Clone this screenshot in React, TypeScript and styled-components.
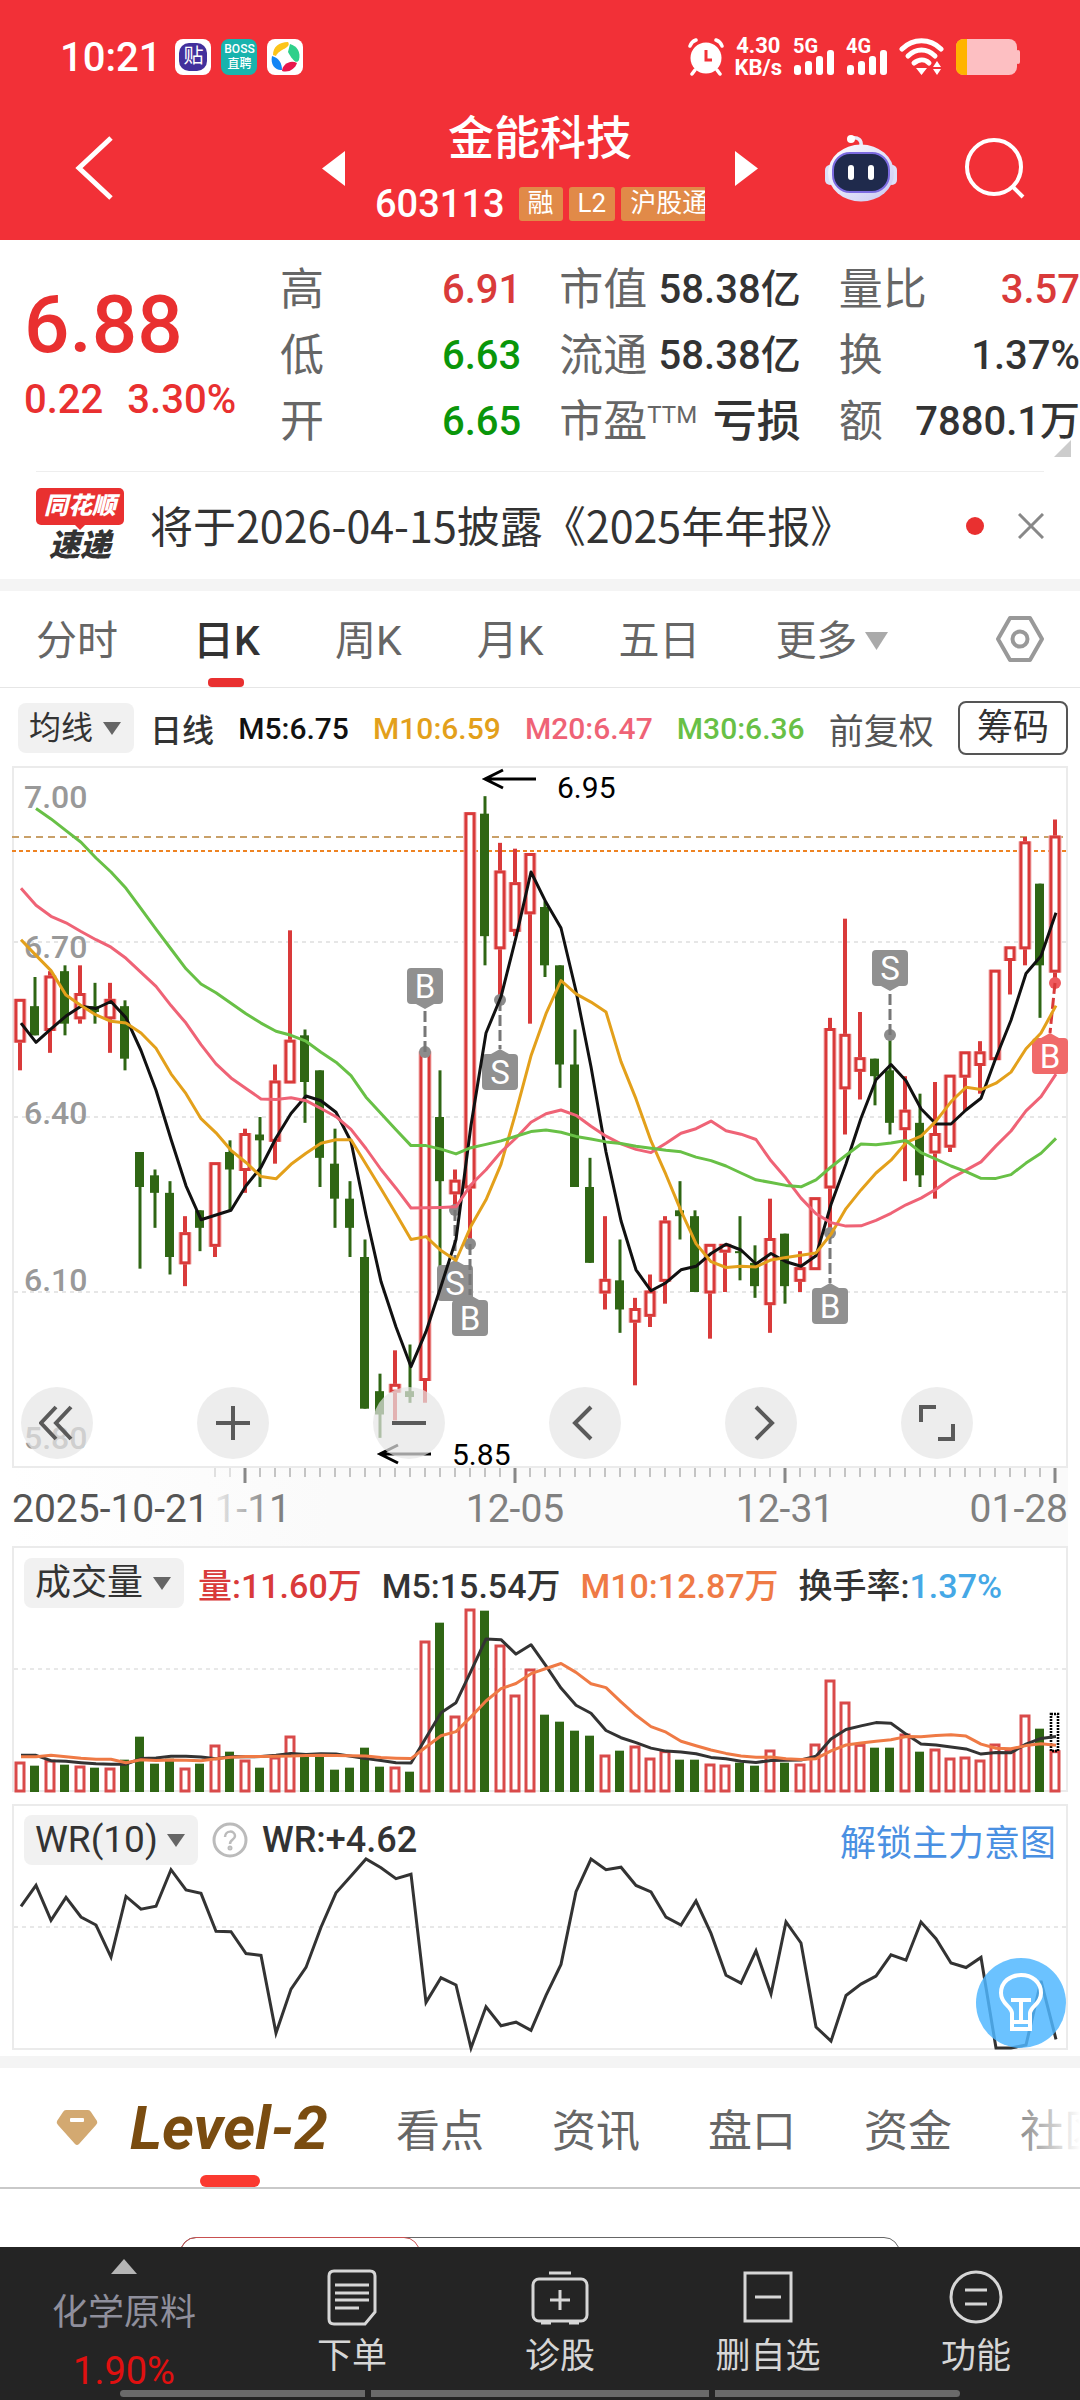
import React from "react";
import styled, { createGlobalStyle, css } from "styled-components";

const SANS = `Roboto, "Noto Sans CJK SC", sans-serif`;

const C = {
  red: "#e93030",
  brand: "#f23037",
  up: "#d93a3a",
  down: "#2f6614",
  fall: "#0a960a",
  ink: "#333333",
  mute: "#666666",
  line: "#ebebeb",
  band: "#f4f4f4",
};

const GlobalStyle = createGlobalStyle`
  *, *::before, *::after { box-sizing: border-box; }
  body { margin: 0; background: #fff; font-family: ${SANS}; color: ${C.ink}; }
  button { border: 0; padding: 0; margin: 0; background: none; font: inherit; color: inherit; cursor: pointer; }
  a { color: inherit; text-decoration: none; }
  h1, p, dl, dd, dt { margin: 0; font-weight: inherit; }
  svg { display: block; }
`;

/* ---------- market data (prices in cents: open, close, high, low) ---------- */

type Candle = [number, number, number, number];

const CANDLES: Candle[] = [
  [653, 660, 660, 648], [659, 654, 664, 654], [655, 664, 665, 651], [665, 656, 666, 654],
  [657, 661, 666, 656], [659, 658, 663, 656], [657, 660, 663, 651], [659, 650, 660, 648],
  [634, 628, 634, 614], [630, 627, 631, 621], [627, 616, 629, 613], [615, 620, 623, 611],
  [624, 621, 624, 617], [618, 632, 632, 616], [634, 631, 636, 624], [631, 637, 638, 627],
  [637, 636, 640, 628], [636, 646, 649, 632], [646, 653, 672, 646], [654, 646, 655, 639],
  [648, 633, 648, 628], [632, 626, 638, 621], [626, 621, 629, 616], [616, 590, 619, 590],
  [593, 589, 596, 585], [593, 594, 600, 588], [593, 592, 601, 591], [595, 651, 651, 591],
  [640, 629, 648, 614], [627, 629, 631, 624], [628, 692, 692, 618], [692, 671, 695, 666],
  [669, 682, 687, 660], [672, 680, 686, 671], [675, 685, 685, 656], [676, 666, 677, 664],
  [666, 649, 666, 645], [649, 628, 655, 628], [628, 615, 633, 615], [610, 612, 623, 607],
  [612, 607, 619, 603], [605, 607, 609, 594], [606, 610, 613, 604], [612, 622, 623, 608],
  [624, 623, 629, 619], [623, 610, 624, 610], [610, 618, 618, 602], [617, 618, 618, 610],
  [617, 617, 623, 612], [615, 611, 618, 609], [608, 619, 626, 603], [620, 611, 620, 608],
  [612, 614, 617, 610], [614, 626, 626, 614], [628, 655, 657, 620], [645, 654, 674, 637],
  [648, 650, 658, 643], [650, 647, 650, 642], [648, 639, 654, 637], [638, 641, 647, 629],
  [639, 630, 644, 628], [634, 637, 646, 626], [635, 647, 647, 634], [647, 651, 651, 641],
  [649, 651, 653, 644], [650, 665, 665, 650], [667, 669, 669, 661], [669, 687, 688, 666],
  [680, 666, 680, 657], [665, 688, 691, 663],
];

const VOLUMES = [
  87, 76, 93, 79, 75, 70, 69, 94, 163, 82, 97, 69, 82, 138, 118, 93, 70, 102, 165, 102, 105, 64,
  70, 130, 73, 72, 58, 450, 505, 225, 546, 541, 438, 288, 366, 229, 208, 181, 166, 108, 121, 135,
  99, 121, 94, 94, 81, 78, 85, 76, 123, 85, 81, 141, 333, 267, 140, 130, 130, 171, 118, 126, 99,
  102, 93, 141, 125, 228, 187, 121,
];

const EARLY = {
  m5: [656.1, 652.8, 655.1, 657.3],
  m10: [670.4, 667.7, 665.1, 660.9, 659.1, 657.5, 656.4, 656.1, 654.4],
  m20: [
    679.2, 676.3, 674.4, 673.3, 671.8, 670.4, 669.1, 667.2, 664.8, 662.4, 659.1, 656.1, 652.4,
    649.1, 646.7, 644.9, 643.1, 643, 643.3,
  ],
  m30: [
    NaN, 692.9, 691.1, 689.1, 687.1, 684.4, 682, 679.2, 675.7, 672.2, 668.8, 665.4, 662.8, 661.3,
    659.5, 657.7, 656.1, 654.7, 654, 653, 651.1, 649.4, 647.1, 643.4, 640.6, 637.8, 635.1, 635.1,
    634.5,
  ],
  v5: [104, 104, 88, 86],
  v10: [100, 100, 104, 100, 95, 92, 92, 82, 91],
  wr: [75, 86.1, 67.5, 79.7, 69.3, 65.1, 48.1, 80.2, 73.5],
};

const average = (values: number[], span: number, early: number[]) =>
  values.map((_, i) =>
    i < span - 1
      ? early[i]
      : values.slice(i - span + 1, i + 1).reduce((a, b) => a + b, 0) / span
  );

const closes = CANDLES.map((c) => c[1]);
const WR = CANDLES.map((c, i) => {
  if (i < 9) return EARLY.wr[i];
  const span = CANDLES.slice(i - 9, i + 1);
  const high = Math.max(...span.map((s) => s[2]));
  const low = Math.min(...span.map((s) => s[3]));
  return ((high - c[1]) / (high - low)) * 100;
});

const STEP = 15;
const xAt = (i: number) => 6 + i * STEP;
const priceY = (p: number) => ((700 - p) * 700) / 120 - 1;
const volY = (v: number) => 182 - v / 3;
const wrY = (w: number) => 184 - w * 1.89;
const isUp = (c: Candle) => c[1] > c[0];

const linePoints = (values: number[], y: (n: number) => number) =>
  values
    .map((v, i) => (Number.isNaN(v) ? "" : `${xAt(i) + 1},${y(v).toFixed(1)}`))
    .filter(Boolean)
    .join(" ");

/* ---------- layout ---------- */

const Page = styled.div`
  display: flex;
  flex-direction: column;
  min-height: 100vh;
  overflow: hidden;
`;
const Row = styled.div<{ $gap?: number }>`
  display: flex;
  align-items: center;
  gap: ${(p) => p.$gap ?? 0}px;
`;
const Band = styled.div`
  height: 12px;
  background: ${C.band};
`;

/* ---------- header ---------- */

const Header = styled.header`
  background: ${C.brand};
  color: #fff;
  height: 240px;
`;
const StatusBar = styled.div`
  display: flex;
  align-items: center;
  justify-content: space-between;
  height: 108px;
  padding: 6px 60px 0;
`;
const Clock = styled.time`
  font-size: 40px;
  font-weight: 500;
  margin-right: 4px;
`;
const NetSpeed = styled.div`
  font-size: 22px;
  line-height: 22px;
  font-weight: 700;
  text-align: center;
  span {
    display: block;
  }
`;
const SignalBox = styled.div`
  display: grid;
  height: 36px;
  width: 42px;
  span {
    grid-area: 1 / 1;
    font-size: 20px;
    line-height: 14px;
    font-weight: 700;
  }
  svg {
    grid-area: 1 / 1;
  }
`;
const BossIcon = styled.span`
  width: 36px;
  height: 36px;
  border-radius: 8px;
  background: #19b3ad;
  display: flex;
  flex-direction: column;
  align-items: center;
  justify-content: center;
  font-size: 12px;
  line-height: 15px;
  font-weight: 500;
`;
const PostIcon = styled.span`
  width: 36px;
  height: 36px;
  border-radius: 8px;
  background: #fff;
  display: grid;
  place-items: center;
  span {
    width: 28px;
    height: 28px;
    border-radius: 10px;
    background: #42309c;
    font-size: 20px;
    line-height: 27px;
    text-align: center;
  }
`;
const TitleBar = styled.div`
  display: grid;
  grid-template-columns: 1fr 330px 1fr;
  align-items: center;
  height: 120px;
  column-gap: 30px;
`;
const TitleSide = styled.div<{ $right?: boolean }>`
  display: flex;
  align-items: center;
  justify-content: space-between;
  padding: ${(p) => (p.$right ? "0 54px 0 0" : "0 0 0 74px")};
`;
const StockName = styled.h1`
  font-size: 46px;
  line-height: 60px;
  font-weight: 500;
  text-align: center;
`;
const CodeLine = styled.div`
  display: flex;
  align-items: center;
  gap: 6px;
  height: 48px;
  margin-top: 12px;
  overflow: hidden;
  white-space: nowrap;
`;
const Code = styled.span`
  font-size: 38px;
  font-weight: 500;
  margin-right: 8px;
`;
const Tag = styled.span`
  background: #e18a48;
  font-size: 26px;
  line-height: 32px;
  height: 34px;
  padding: 0 9px;
  border-radius: 3px;
  flex: none;
`;

/* ---------- quote summary ---------- */

const Quote = styled.section`
  display: grid;
  grid-template-columns: 242px 1fr 1fr 1fr;
  column-gap: 38px;
  height: 231px;
  padding-top: 17px;
  position: relative;
`;
const PriceBlock = styled.div`
  padding: 18px 0 0 24px;
  color: ${C.red};
  font-weight: 500;
  white-space: nowrap;
`;
const Price = styled.p`
  font-size: 80px;
  line-height: 100px;
`;
const Change = styled.p`
  display: flex;
  gap: 24px;
  font-size: 40px;
  line-height: 50px;
`;
const Stats = styled.dl`
  white-space: nowrap;
`;
const Stat = styled.div`
  display: flex;
  justify-content: space-between;
  font-size: 44px;
  line-height: 66px;
  dt {
    color: ${C.mute};
  }
  sup {
    font-size: 24px;
    line-height: 24px;
    vertical-align: 14px;
  }
`;
const StatValue = styled.dd<{ $color?: string; $size?: number }>`
  font-size: ${(p) => p.$size ?? 40}px;
  font-weight: 500;
  color: ${(p) => p.$color ?? C.ink};
`;
const Corner = styled.i`
  position: absolute;
  right: 9px;
  bottom: 14px;
  border-left: 17px solid transparent;
  border-bottom: 17px solid #ccc;
`;

const News = styled.section`
  display: flex;
  align-items: center;
  height: 108px;
  margin: 0 36px;
  border-top: 1px solid #eee;
  gap: 26px;
`;
const NewsLogo = styled.div`
  width: 88px;
  font-weight: 900;
  font-style: italic;
  text-align: center;
  b {
    display: block;
    position: relative;
    background: ${C.red};
    color: #fff;
    border-radius: 5px;
    font-size: 24px;
    line-height: 37px;
  }
  b::after {
    content: "";
    position: absolute;
    left: 38px;
    top: 36px;
    border: 6px solid transparent;
    border-top-color: ${C.red};
    border-bottom: 0;
  }
  span {
    display: block;
    padding-top: 3px;
    font-size: 31px;
    line-height: 35px;
  }
`;
const NewsLink = styled.a`
  flex: 1;
  font-family: "Noto Sans CJK SC", sans-serif;
  font-size: 43px;
  line-height: 60px;
  padding-bottom: 4px;
  white-space: nowrap;
`;
const Dot = styled.i`
  width: 18px;
  height: 18px;
  border-radius: 50%;
  background: ${C.red};
  margin-right: 8px;
`;

/* ---------- period tabs ---------- */

const Tabs = styled.nav`
  display: flex;
  align-items: center;
  height: 97px;
  padding: 0 36px;
  gap: 75px;
  border-bottom: 1px solid #e6e6e6;
  & > :last-child {
    margin-left: auto;
  }
`;
const Tab = styled.button<{ $on?: boolean }>`
  position: relative;
  height: 96px;
  font-size: 41px;
  line-height: 60px;
  padding-top: 4px;
  color: ${C.mute};
  white-space: nowrap;
  display: flex;
  align-items: center;
  gap: 8px;
  ${(p) =>
    p.$on &&
    css`
      color: ${C.ink};
      font-weight: 500;
      &::after {
        content: "";
        position: absolute;
        left: calc(50% - 18px);
        bottom: 0;
        width: 36px;
        height: 9px;
        border-radius: 4px;
        background: ${C.red};
      }
    `}
`;
const IconButton = styled.button`
  display: grid;
  place-items: center;
`;

/* ---------- indicator rows ---------- */

const Legend = styled.div`
  display: flex;
  align-items: center;
  justify-content: space-between;
  height: 78px;
  padding: 2px 12px 0 18px;
  white-space: nowrap;
`;
const SelectBox = styled.label`
  display: flex;
  align-items: center;
  gap: 9px;
  height: 50px;
  padding: 0 13px 0 11px;
  background: #f1f1f1;
  border-radius: 8px;
`;
const Select = styled.select<{ $size: number }>`
  appearance: none;
  border: 0;
  padding: 0;
  background: transparent;
  font-family: inherit;
  font-size: ${(p) => p.$size}px;
  line-height: 48px;
  color: ${C.ink};
`;
const Figure = styled.span<{ $color?: string; $size?: number }>`
  color: ${(p) => p.$color ?? C.ink};
  font-size: ${(p) => p.$size ?? 30}px;
  font-weight: 500;
  white-space: nowrap;
`;
const Outline = styled.button`
  height: 54px;
  padding: 0 17px;
  border: 2px solid #555;
  border-radius: 8px;
  font-size: 36px;
  line-height: 48px;
`;
const PlainButton = styled.button`
  font-size: 35px;
  color: #555;
`;

/* ---------- chart panels ---------- */

const Panel = styled.section<{ $h: number }>`
  position: relative;
  height: ${(p) => p.$h}px;
  margin: 0 12px;
  border: 2px solid ${C.line};
`;
const Plot = styled.svg<{ $h: number }>`
  width: 100%;
  height: ${(p) => p.$h}px;
  overflow: visible;
  font-family: ${SANS};
`;
const PanelHead = styled.div<{ $h: number }>`
  display: flex;
  align-items: center;
  height: ${(p) => p.$h}px;
  padding: 10px 10px 0 10px;
  gap: 14px;
  & > span + span {
    margin-left: 6px;
  }
`;
const Controls = styled.div`
  position: absolute;
  left: 7px;
  bottom: 7px;
  display: flex;
  gap: 104px;
`;
const Round = styled.button`
  width: 72px;
  height: 72px;
  border-radius: 50%;
  background: rgba(230, 230, 230, 0.7);
  display: grid;
  place-items: center;
`;
const TimeAxis = styled.div`
  height: 78px;
  margin: 0 12px;
  background: linear-gradient(to right, #fff, #fafafa 30%);
`;
const UnlockLink = styled.a`
  margin-left: auto;
  color: #4a90e2;
  font-size: 36px;
  white-space: nowrap;
`;
const Bulb = styled.button`
  position: absolute;
  right: 0;
  top: 152px;
  width: 90px;
  height: 90px;
  border-radius: 50%;
  background: rgba(79, 182, 255, 0.84);
  display: grid;
  place-items: center;
`;
const Gap = styled.div<{ $h: number }>`
  height: ${(p) => p.$h}px;
`;

/* ---------- lower tabs ---------- */

const LowerTabs = styled.nav`
  position: relative;
  display: flex;
  align-items: center;
  height: 121px;
  padding-left: 56px;
  gap: 68px;
  border-bottom: 2px solid #c9c9c9;
  overflow: hidden;
  &::after {
    content: "";
    position: absolute;
    right: 0;
    top: 0;
    width: 80px;
    height: 118px;
    background: linear-gradient(to right, rgba(255, 255, 255, 0), #fff);
  }
`;
const LevelTab = styled.button`
  position: relative;
  display: flex;
  align-items: center;
  gap: 32px;
  height: 119px;
  color: #7a4c10;
  font-size: 61px;
  font-weight: 700;
  font-style: italic;
  white-space: nowrap;
  &::after {
    content: "";
    position: absolute;
    left: 144px;
    bottom: 0;
    width: 60px;
    height: 12px;
    border-radius: 6px;
    background: #fb3a30;
  }
`;
const LowerTab = styled.button`
  font-size: 44px;
  color: ${C.mute};
  white-space: nowrap;
`;
const Peek = styled.div`
  flex: none;
  height: 58px;
  overflow: hidden;
  display: flex;
  justify-content: center;
  padding-top: 48px;
`;
const Segment = styled.div`
  display: flex;
  width: 720px;
  height: 80px;
  border: 1px solid #666;
  border-radius: 16px;
`;
const SegmentOn = styled.div`
  width: 240px;
  margin: -1px;
  border: 1px solid #c85050;
  border-radius: 16px;
`;

/* ---------- bottom bar ---------- */

const BottomBar = styled.nav`
  position: relative;
  display: grid;
  grid-template-columns: 248fr repeat(4, 208fr);
  margin-top: auto;
  height: 153px;
  background: #242424;
  color: #d6d6d6;
`;
const Industry = styled.button`
  display: flex;
  flex-direction: column;
  align-items: center;
  padding-top: 12px;
  font-size: 36px;
  color: #8f8f9c;
  svg {
    margin-bottom: 14px;
  }
  span {
    line-height: 50px;
  }
  em {
    font-style: normal;
    font-size: 38px;
    line-height: 46px;
    margin-top: 10px;
    color: #e01010;
  }
`;
const Action = styled.button`
  display: flex;
  flex-direction: column;
  align-items: center;
  padding-top: 21px;
  font-size: 35px;
  line-height: 50px;
  gap: 6px;
`;
const HomeBar = styled.div`
  position: absolute;
  left: 120px;
  right: 120px;
  bottom: 3px;
  display: grid;
  grid-template-columns: 245fr 338fr 245fr;
  gap: 6px;
  height: 7px;
  i {
    background: #6a6a6a;
  }
  i:first-child {
    border-radius: 4px 0 0 4px;
  }
  i:last-child {
    border-radius: 0 4px 4px 0;
  }
`;

/* ---------- small drawings ---------- */

const Triangle = ({ w, h, dir, fill }: { w: number; h: number; dir: "l" | "r" | "d" | "u"; fill: string }) => {
  const pts = {
    l: `${w},0 ${w},${h} 0,${h / 2}`,
    r: `0,0 0,${h} ${w},${h / 2}`,
    d: `0,0 ${w},0 ${w / 2},${h}`,
    u: `0,${h} ${w},${h} ${w / 2},0`,
  }[dir];
  return (
    <svg width={w} height={h} aria-hidden="true">
      <polygon points={pts} fill={fill} />
    </svg>
  );
};

const Signal = ({ label }: { label: string }) => (
  <SignalBox>
    <span>{label}</span>
    <svg width="42" height="36" fill="#fff" aria-hidden="true">
      <rect x="1" y="26" width="7" height="10" rx="3" />
      <rect x="12" y="22" width="7" height="14" rx="3" />
      <rect x="23" y="17" width="7" height="19" rx="3" />
      <rect x="34" y="11" width="7" height="25" rx="3" />
    </svg>
  </SignalBox>
);

const AlarmIcon = () => (
  <svg width="36" height="38" viewBox="0 0 36 38" aria-hidden="true">
    <g stroke="#fff" strokeWidth="3.5" strokeLinecap="round" fill="none">
      <path d="M2 8 C3 5 5 3 8 2 M34 8 C33 5 31 3 28 2 M7 32 L4 36 M29 32 L32 36" />
    </g>
    <circle cx="18" cy="20" r="15.5" fill="#fff" />
    <path d="M18 12 V22 H24" stroke={C.brand} strokeWidth="3" fill="none" />
  </svg>
);

const WifiIcon = () => (
  <svg width="46" height="38" viewBox="0 0 46 38" aria-hidden="true">
    <g fill="none" stroke="#fff" strokeWidth="5" strokeLinecap="round">
      <path d="M3 11 C14 0 31 0 42 11" />
      <path d="M9 18 C17 10 28 10 36 18" />
      <path d="M15 25 C20 21 26 21 30 25" />
    </g>
    <path d="M17 30 H28 L22.5 37 Z M34 29 L38 23 L42 29 Z M34 31 L38 37 L42 31 Z" fill="#fff" />
  </svg>
);

const BatteryIcon = () => (
  <svg width="64" height="36" viewBox="0 0 64 36" aria-hidden="true">
    <rect x="0" y="0" width="61" height="36" rx="8" fill="#fdbfc2" />
    <rect x="60" y="11" width="4" height="14" rx="2" fill="#fdbfc2" />
    <path d="M8 0 H11 V36 H8 Q0 36 0 28 V8 Q0 0 8 0Z" fill="#ffb400" />
  </svg>
);

const PinwheelIcon = () => (
  <svg width="36" height="36" viewBox="0 0 36 36" aria-hidden="true">
    <rect width="36" height="36" rx="8" fill="#fff" />
    <path d="M6 16 C6 8 12 3 21 3 C25 9 12 10 9 17 Z" fill="#fcc419" />
    <path d="M23 5 C30 7 34 13 32 21 C29 26 25 20 21 13 Z" fill="#2fd08a" />
    <path d="M5 17 C12 19 15 24 15 31 C9 32 3 26 5 17Z" fill="#1285f5" />
    <path d="M30 24 C28 30 22 34 15 32 C15 27 22 20 30 24Z" fill="#e8174b" />
  </svg>
);

const RobotIcon = () => (
  <svg width="74" height="68" viewBox="0 0 74 68" aria-hidden="true">
    <defs>
      <linearGradient id="shell" x1="0" y1="0" x2="1" y2="1">
        <stop offset="0" stopColor="#ffffff" />
        <stop offset="1" stopColor="#c8c8f2" />
      </linearGradient>
    </defs>
    <path d="M37 12 C38 6 34 3 28 4" fill="none" stroke="#e8eafa" strokeWidth="3.5" />
    <circle cx="27" cy="5" r="4" fill="#fff" />
    <rect x="1" y="31" width="10" height="20" rx="5" fill="#dde0f8" />
    <rect x="63" y="31" width="10" height="20" rx="5" fill="#dde0f8" />
    <ellipse cx="37" cy="39" rx="33" ry="28.5" fill="url(#shell)" />
    <rect x="9" y="19" width="56" height="39" rx="17" fill="#1f2a4c" stroke="#7c6be0" strokeWidth="2" />
    <rect x="24" y="31" width="6" height="15" rx="3" fill="#fff" />
    <rect x="44" y="31" width="6" height="15" rx="3" fill="#fff" />
  </svg>
);

/* ---------- trade markers ---------- */

type Trade = { i: number; side: "B" | "S"; top: number; dot: number; red?: boolean };

const TRADES: Trade[] = [
  { i: 27, side: "B", top: 200, dot: 284 },
  { i: 29, side: "S", top: 497, dot: 442 },
  { i: 30, side: "B", top: 532, dot: 476 },
  { i: 32, side: "S", top: 286, dot: 232 },
  { i: 54, side: "B", top: 520, dot: 465 },
  { i: 58, side: "S", top: 182, dot: 267 },
  { i: 69, side: "B", top: 270, dot: 215, red: true },
];

const TradeMark = ({ i, side, top, dot, red }: Trade) => {
  const x = xAt(i);
  const bx = red ? x - 5 : x;
  const above = top < dot;
  const edge = above ? top + 36 : top;
  const tip = above ? edge + 5 : edge - 5;
  const fill = red ? "#f06a6a" : "#909090";
  return (
    <g>
      <circle cx={x} cy={dot} r="6" fill={red ? "#ee5a5e" : "#8c8c8c"} />
      <line x1={x} y1={dot} x2={bx} y2={tip} stroke={red ? C.up : "#777"} strokeWidth="3" strokeDasharray="11 4" />
      <polygon points={`${bx - 9},${edge} ${bx + 9},${edge} ${bx},${tip}`} fill={fill} />
      <rect x={bx - 18} y={top} width="36" height="36" rx="4" fill={fill} />
      <text x={bx} y={top + 30} fontSize="33" fill="#fff" textAnchor="middle">
        {side}
      </text>
    </g>
  );
};

const CandleChart = () => (
  <Plot $h={698} viewBox="0 0 1052 698" preserveAspectRatio="none" role="img" aria-label="日K线图">
    {[670, 640, 610].map((p) => (
      <line key={p} x1="0" x2="1052" y1={priceY(p)} y2={priceY(p)} stroke="#dedede" strokeWidth="1.5" strokeDasharray="4 4" />
    ))}
    <g fill="#999" fontSize="32" fontWeight="500">
      <text x="10" y="40">7.00</text>
      <text x="10" y="190">6.70</text>
      <text x="10" y="356">6.40</text>
      <text x="10" y="523">6.10</text>
      <text x="10" y="681">5.80</text>
    </g>
    <line x1="-2" x2="1052" y1="69" y2="69" stroke="#c9a068" strokeWidth="2" strokeDasharray="7 5" />
    <line x1="-2" x2="1052" y1="83" y2="83" stroke="#ee8322" strokeWidth="2" strokeDasharray="4 3" />
    {CANDLES.map((c, i) => {
      const up = isUp(c);
      const x = xAt(i);
      const top = priceY(Math.max(c[0], c[1]));
      const bottom = priceY(Math.min(c[0], c[1]));
      const color = up ? C.up : C.down;
      return (
        <g key={i} stroke={color}>
          <line x1={x} x2={x} y1={priceY(c[2])} y2={priceY(c[3])} strokeWidth={up ? 4 : 3} />
          {up ? (
            <>
              <rect x={x - 5} y={top} width="10" height={bottom - top} fill="#fff" stroke="#f3b6b6" strokeWidth="3" />
              <rect x={x - 4} y={top} width="8" height={bottom - top} fill="#fff" strokeWidth="3" />
            </>
          ) : (
            <rect x={x - 5} y={top} width="9" height={Math.max(bottom - top, 2)} fill={color} stroke="none" />
          )}
        </g>
      );
    })}
    {TRADES.map((t) => (
      <TradeMark key={t.i} {...t} />
    ))}
    <g fill="none" strokeWidth="3" strokeLinejoin="round">
      <polyline points={linePoints(average(closes, 5, EARLY.m5), priceY)} stroke="#111" />
      <polyline points={linePoints(average(closes, 10, EARLY.m10), priceY)} stroke="#e3a01b" />
      <polyline points={linePoints(average(closes, 20, EARLY.m20), priceY)} stroke="#ef6376" />
      <polyline points={linePoints(average(closes, 30, EARLY.m30), priceY)} stroke="#68c046" />
    </g>
    <g fill="none" stroke="#000" strokeWidth="3">
      <path d="M522 11 H471 M489 2 L471 11 L489 20" />
      <path d="M417 686 H366 M384 677 L366 686 L384 695" />
    </g>
    <g fontSize="30" fill="#000">
      <text x="543" y="30">6.95</text>
      <text x="438" y="697">5.85</text>
    </g>
  </Plot>
);

const AxisChart = () => (
  <Plot $h={78} viewBox="0 0 1056 78" preserveAspectRatio="none" role="img" aria-label="日期">
    {CANDLES.map((_, i) => {
      if (i < 13) return null;
      const major = (i - 15) % 18 === 0;
      return (
        <line
          key={i}
          x1={xAt(i) + 2}
          x2={xAt(i) + 2}
          y1="0"
          y2={major ? 15 : 9}
          stroke={major ? "#888" : i < 15 ? "#e0e0e0" : "#c4c4c4"}
          strokeWidth={major ? 3 : 2}
        />
      );
    })}
    <g fontSize="39" fill="#808080">
      <defs>
        <linearGradient id="fade" gradientUnits="userSpaceOnUse" x1="196" x2="260" y1="0" y2="0">
          <stop offset="0" stopColor="#808080" stopOpacity="0" />
          <stop offset="1" stopColor="#808080" />
        </linearGradient>
      </defs>
      <text x="0" y="54" fill="#555">2025-10-21</text>
      <text x="279" y="54" fill="url(#fade)" textAnchor="end">1-11</text>
      <text x="503" y="54" textAnchor="middle">12-05</text>
      <text x="773" y="54" textAnchor="middle">12-31</text>
      <text x="1056" y="54" textAnchor="end">01-28</text>
    </g>
  </Plot>
);

const VolumeChart = () => (
  <Plot $h={182} viewBox="0 0 1052 182" preserveAspectRatio="none" role="img" aria-label="成交量">
    <line x1="0" x2="1052" y1="61" y2="61" stroke="#e8e8e8" strokeWidth="2" strokeDasharray="4 4" />
    {VOLUMES.map((v, i) => {
      const x = xAt(i);
      return isUp(CANDLES[i]) ? (
        <rect key={i} x={x - 4} y={volY(v) + 2} width="8" height={v / 3 - 1} fill="#fff" stroke="#d94a4a" strokeWidth="3" />
      ) : (
        <rect key={i} x={x - 5} y={volY(v) + 1} width="9" height={v / 3 + 1} fill={C.down} />
      );
    })}
    <rect x={xAt(69) - 4} y="106" width="7" height="37" fill="none" stroke="#000" strokeWidth="2.6" strokeDasharray="2 1" />
    <g fill="none" strokeWidth="3" strokeLinejoin="round">
      <polyline points={linePoints(average(VOLUMES, 5, EARLY.v5), volY)} stroke="#333" />
      <polyline points={linePoints(average(VOLUMES, 10, EARLY.v10), volY)} stroke="#ef7a45" />
    </g>
  </Plot>
);

const WrChart = () => (
  <Plot $h={184} viewBox="0 0 1052 184" preserveAspectRatio="none" role="img" aria-label="威廉指标">
    <line x1="0" x2="1052" y1="63" y2="63" stroke="#e8e8e8" strokeWidth="2" strokeDasharray="4 4" />
    <polyline points={linePoints(WR, wrY)} fill="none" stroke="#333" strokeWidth="3" />
  </Plot>
);

const DropDown = ({ value, label, size }: { value: string; label: string; size: number }) => (
  <SelectBox>
    <Select aria-label={label} $size={size} defaultValue={value}>
      <option>{value}</option>
    </Select>
    <Triangle w={18} h={13} dir="d" fill="#666" />
  </SelectBox>
);

const glyph = { fill: "none", stroke: "#5a5a5a", strokeWidth: 4 };

export default function App() {
  return (
    <Page>
      <GlobalStyle />
      <Header>
        <StatusBar>
          <Row $gap={10}>
            <Clock>10:21</Clock>
            <PostIcon>
              <span>贴</span>
            </PostIcon>
            <BossIcon>
              <span>BOSS</span>
              <span>直聘</span>
            </BossIcon>
            <PinwheelIcon />
          </Row>
          <Row $gap={11}>
            <AlarmIcon />
            <NetSpeed>
              <span>4.30</span>
              <span>KB/s</span>
            </NetSpeed>
            <Signal label="5G" />
            <Signal label="4G" />
            <WifiIcon />
            <BatteryIcon />
          </Row>
        </StatusBar>
        <TitleBar>
          <TitleSide>
            <IconButton aria-label="返回">
              <svg width="40" height="66" viewBox="0 0 40 66">
                <path d="M37 3 L5 33 L37 63" fill="none" stroke="#fff" strokeWidth="5" />
              </svg>
            </IconButton>
            <IconButton aria-label="上一只">
              <Triangle w={23} h={35} dir="l" fill="#fff" />
            </IconButton>
          </TitleSide>
          <div>
            <StockName>金能科技</StockName>
            <CodeLine>
              <Code>603113</Code>
              <Tag>融</Tag>
              <Tag>L2</Tag>
              <Tag>沪股通</Tag>
            </CodeLine>
          </div>
          <TitleSide $right>
            <IconButton aria-label="下一只">
              <Triangle w={23} h={35} dir="r" fill="#fff" />
            </IconButton>
            <IconButton aria-label="智能助手">
              <RobotIcon />
            </IconButton>
            <IconButton aria-label="搜索">
              <svg width="62" height="62" viewBox="0 0 62 62" fill="none" stroke="#fff" strokeWidth="4">
                <circle cx="30" cy="30" r="27" />
                <path d="M48 49 L59 60" />
              </svg>
            </IconButton>
          </TitleSide>
        </TitleBar>
      </Header>

      <Quote>
        <PriceBlock>
          <Price>6.88</Price>
          <Change>
            <span>0.22</span>
            <span>3.30%</span>
          </Change>
        </PriceBlock>
        <Stats>
          <Stat>
            <dt>高</dt>
            <StatValue $color={C.up}>6.91</StatValue>
          </Stat>
          <Stat>
            <dt>低</dt>
            <StatValue $color={C.fall}>6.63</StatValue>
          </Stat>
          <Stat>
            <dt>开</dt>
            <StatValue $color={C.fall}>6.65</StatValue>
          </Stat>
        </Stats>
        <Stats>
          <Stat>
            <dt>市值</dt>
            <StatValue>58.38亿</StatValue>
          </Stat>
          <Stat>
            <dt>流通</dt>
            <StatValue>58.38亿</StatValue>
          </Stat>
          <Stat>
            <dt>
              市盈<sup>TTM</sup>
            </dt>
            <StatValue $size={44}>亏损</StatValue>
          </Stat>
        </Stats>
        <Stats>
          <Stat>
            <dt>量比</dt>
            <StatValue $color={C.up}>3.57</StatValue>
          </Stat>
          <Stat>
            <dt>换</dt>
            <StatValue>1.37%</StatValue>
          </Stat>
          <Stat>
            <dt>额</dt>
            <StatValue>7880.1万</StatValue>
          </Stat>
        </Stats>
        <Corner />
      </Quote>

      <News>
        <NewsLogo>
          <b>同花顺</b>
          <span>速递</span>
        </NewsLogo>
        <NewsLink href="#news">将于2026-04-15披露《2025年年报》</NewsLink>
        <Dot />
        <IconButton aria-label="关闭">
          <svg width="26" height="26" stroke="#888" strokeWidth="3">
            <path d="M1 1 L25 25 M25 1 L1 25" />
          </svg>
        </IconButton>
      </News>
      <Band />

      <Tabs>
        <Tab>分时</Tab>
        <Tab $on>日K</Tab>
        <Tab>周K</Tab>
        <Tab>月K</Tab>
        <Tab>五日</Tab>
        <Tab>
          更多
          <Triangle w={23} h={18} dir="d" fill="#aaa" />
        </Tab>
        <IconButton aria-label="设置">
          <svg width="48" height="46" viewBox="0 0 48 46" fill="none" stroke="#999" strokeWidth="4" strokeLinejoin="round">
            <path d="M14 2 H34 L46 23 L34 44 H14 L2 23 Z" />
            <circle cx="24" cy="23" r="7.5" />
          </svg>
        </IconButton>
      </Tabs>

      <Legend>
        <Row $gap={16}>
          <DropDown value="均线" label="主图指标" size={32} />
          <Figure $size={32}>日线</Figure>
        </Row>
        <Figure $color="#111">M5:6.75</Figure>
        <Figure $color="#e3a01b">M10:6.59</Figure>
        <Figure $color="#ef6376">M20:6.47</Figure>
        <Figure $color="#68c046">M30:6.36</Figure>
        <PlainButton>前复权</PlainButton>
        <Outline>筹码</Outline>
      </Legend>

      <Panel $h={702}>
        <CandleChart />
        <Controls>
          <Round aria-label="快退">
            <svg width="36" height="36" {...glyph}>
              <path d="M17 2 L2 18 L17 34 M32 2 L17 18 L32 34" />
            </svg>
          </Round>
          <Round aria-label="放大">
            <svg width="36" height="36" {...glyph}>
              <path d="M18 1 V35 M1 18 H35" />
            </svg>
          </Round>
          <Round aria-label="缩小">
            <svg width="36" height="36" {...glyph}>
              <path d="M1 18 H35" />
            </svg>
          </Round>
          <Round aria-label="左移">
            <svg width="36" height="36" {...glyph}>
              <path d="M24 2 L8 18 L24 34" />
            </svg>
          </Round>
          <Round aria-label="右移">
            <svg width="36" height="36" {...glyph}>
              <path d="M13 2 L29 18 L13 34" />
            </svg>
          </Round>
          <Round aria-label="全屏">
            <svg width="38" height="38" {...glyph}>
              <path d="M3 18 V3 H18 M35 20 V35 H20" />
            </svg>
          </Round>
        </Controls>
      </Panel>
      <TimeAxis>
        <AxisChart />
      </TimeAxis>

      <Panel $h={246}>
        <PanelHead $h={60}>
          <DropDown value="成交量" label="副图指标一" size={36} />
          <Figure $size={34} $color={C.up}>量:11.60万</Figure>
          <Figure $size={34}>M5:15.54万</Figure>
          <Figure $size={34} $color="#ef7a45">M10:12.87万</Figure>
          <Figure $size={34}>
            换手率:<Figure as="b" $size={34} $color="#45a8e6">1.37%</Figure>
          </Figure>
        </PanelHead>
        <VolumeChart />
      </Panel>
      <Gap $h={12} />
      <Panel $h={246}>
        <PanelHead $h={58}>
          <DropDown value="WR(10)" label="副图指标二" size={37} />
          <IconButton aria-label="指标说明">
            <svg width="36" height="36" viewBox="0 0 36 36" fill="none" stroke="#bbb" strokeWidth="3">
              <circle cx="18" cy="18" r="16" />
              <path d="M13 15 C13 8 23 8 23 14 C23 18 18 17 18 22" strokeWidth="2.5" />
              <circle cx="18" cy="26" r="1" />
            </svg>
          </IconButton>
          <Figure $size={36}>WR:+4.62</Figure>
          <UnlockLink href="#unlock">解锁主力意图</UnlockLink>
        </PanelHead>
        <WrChart />
        <Bulb aria-label="提示">
          <svg width="46" height="60" viewBox="0 0 46 60" fill="none" stroke="#fff" strokeWidth="4">
            <path d="M14 40 C13 33 3 31 3 20 C3 9 12 2 23 2 C34 2 43 9 43 20 C43 31 33 33 32 40 V56 H14 Z M14 49 H32 M13 27 H33 M23 27 V48" />
          </svg>
        </Bulb>
      </Panel>
      <Gap $h={6} />
      <Band />

      <LowerTabs>
        <LevelTab>
          <svg width="42" height="38" viewBox="0 0 42 38" aria-hidden="true">
            <path d="M10 1 H32 Q34 1 35 3 L41 12 Q42 14 40 16 L23 35 Q21 37 19 35 L2 16 Q0 14 1 12 L7 3 Q8 1 10 1Z" fill="#d3a971" />
            <rect x="14" y="9" width="14" height="4" rx="1" fill="#fff" />
          </svg>
          Level-2
        </LevelTab>
        <LowerTab>看点</LowerTab>
        <LowerTab>资讯</LowerTab>
        <LowerTab>盘口</LowerTab>
        <LowerTab>资金</LowerTab>
        <LowerTab>社区</LowerTab>
      </LowerTabs>
      <Peek>
        <Segment>
          <SegmentOn />
        </Segment>
      </Peek>

      <BottomBar>
        <Industry>
          <Triangle w={26} h={15} dir="u" fill="#b5b5b5" />
          <span>化学原料</span>
          <em>1.90%</em>
        </Industry>
        <Action>
          <svg width="50" height="58" viewBox="0 0 50 58" fill="none" stroke="#d6d6d6" strokeWidth="3">
            <path d="M7 3 H43 Q48 3 48 8 V44 L38 56 H7 Q2 56 2 51 V8 Q2 3 7 3Z M8 17 H42 M8 25 H42 M8 32 H42 M8 40 H32" />
          </svg>
          下单
        </Action>
        <Action>
          <svg width="58" height="58" viewBox="0 0 58 58" fill="none" stroke="#d6d6d6" strokeWidth="3">
            <rect x="2" y="11" width="54" height="42" rx="6" />
            <path d="M18 5 H40 M29 22 V42 M19 32 H39 M10 55 H20 M38 55 H48" />
          </svg>
          诊股
        </Action>
        <Action>
          <svg width="50" height="58" viewBox="0 0 50 58" fill="none" stroke="#d6d6d6" strokeWidth="3">
            <rect x="2" y="5" width="46" height="48" />
            <path d="M12 29 H38" />
          </svg>
          删自选
        </Action>
        <Action>
          <svg width="54" height="58" viewBox="0 0 54 58" fill="none" stroke="#d6d6d6" strokeWidth="3">
            <circle cx="27" cy="29" r="25" />
            <path d="M16 22 H38 M16 36 H38" />
          </svg>
          功能
        </Action>
        <HomeBar>
          <i />
          <i />
          <i />
        </HomeBar>
      </BottomBar>
    </Page>
  );
}
